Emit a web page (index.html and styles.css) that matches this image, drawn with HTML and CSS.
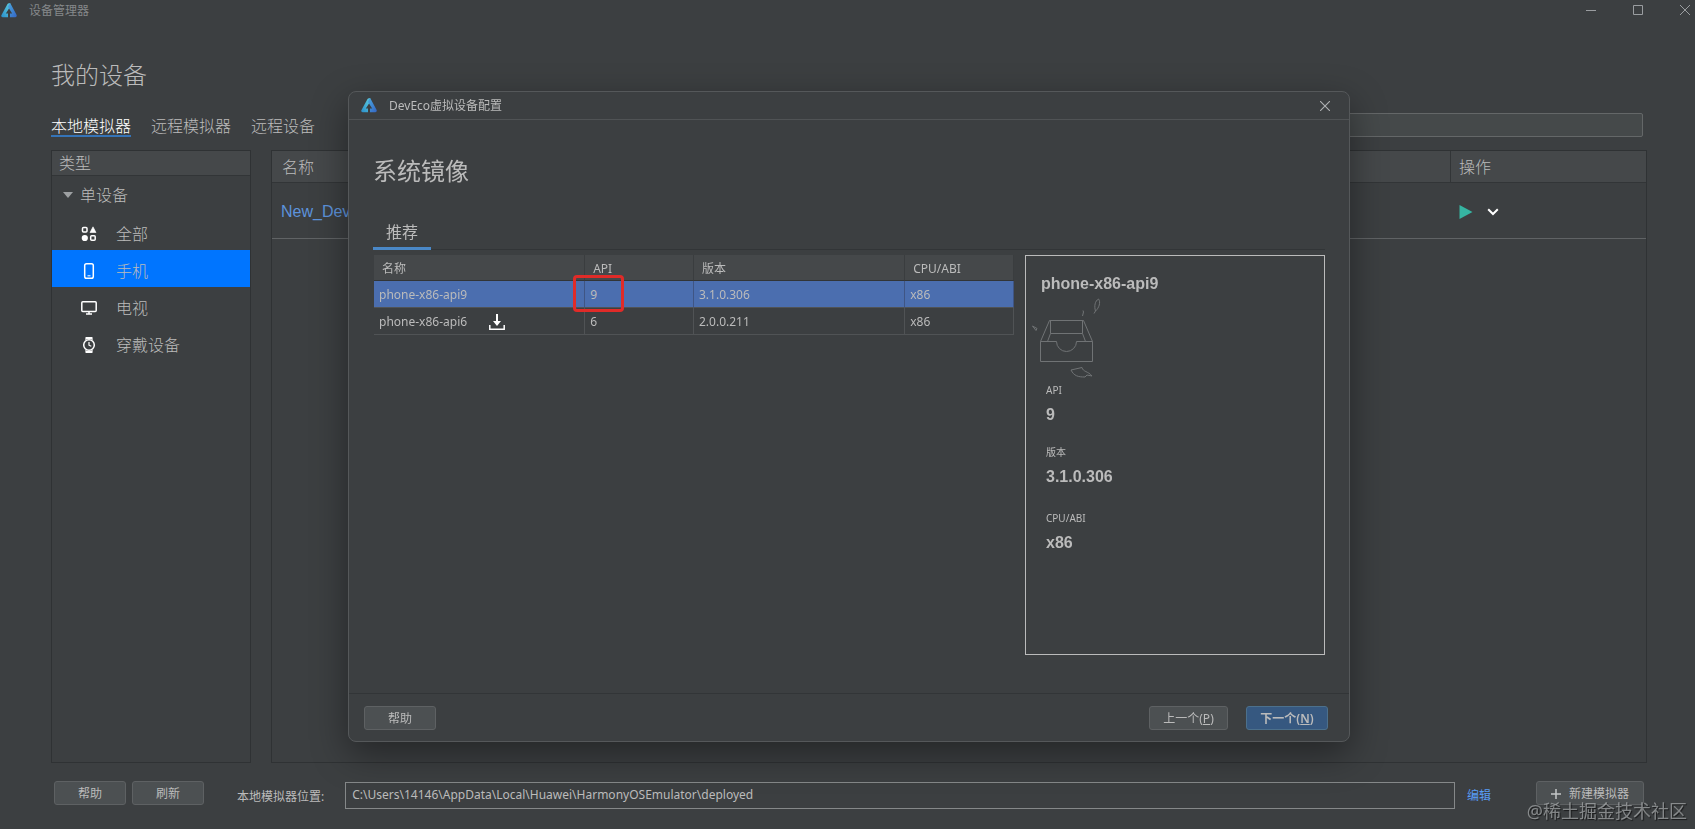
FILE: index.html
```html
<!DOCTYPE html>
<html lang="zh-CN">
<head>
<meta charset="utf-8">
<title>设备管理器</title>
<link rel="stylesheet" href="styles.css">
</head>
<body>
<svg width="0" height="0" class="defs" aria-hidden="true">
  <defs>
    <linearGradient id="lg-left" x1="0" y1="1" x2="1" y2="0"><stop offset="0" stop-color="#2a8ecb"/><stop offset="1" stop-color="#5fd0dc"/></linearGradient>
    <linearGradient id="lg-right" x1="0" y1="0" x2="1" y2="1"><stop offset="0" stop-color="#4aa8e0"/><stop offset="1" stop-color="#3566c4"/></linearGradient>
    <symbol id="logo" viewBox="0 0 16 15">
      <path d="M6.500 1Q7 .3 8 .3H9.500L8 5.500 4.800 10.600H7V14.200H1.600Q-.4 13.800.5 12Z" fill="url(#lg-left)"/>
      <path d="M8.500.3Q9.200.3 9.700 1L15.500 11.800Q16.300 13.800 14.400 14.200H9V10.600H11.200L8 5.500 6.800 3.800Z" fill="url(#lg-right)"/>
    </symbol>
  </defs>
</svg>
<header class="titlebar">
  <svg class="logo"><use href="#logo"/></svg>
  <span class="window-title">设备管理器</span>
  <div class="window-controls">
    <button type="button" aria-label="最小化"><svg width="10" height="10" viewBox="0 0 10 10"><path d="M0 5.500H10"/></svg></button>
    <button type="button" aria-label="最大化"><svg width="10" height="10" viewBox="0 0 10 10"><path d="M.5.5H9.500V9.500H.5Z"/></svg></button>
    <button type="button" aria-label="关闭"><svg width="10" height="10" viewBox="0 0 10 10"><path d="M0 0 10 10M10 0 0 10"/></svg></button>
  </div>
</header>
<main class="manager">
  <h1>我的设备</h1>
  <div class="toolbar">
    <nav class="tabs">
      <a href="#local" class="active">本地模拟器</a>
      <a href="#remote-emulator">远程模拟器</a>
      <a href="#remote-device">远程设备</a>
    </nav>
    <input class="search" type="text" aria-label="搜索">
  </div>
  <div class="panels">
    <section class="types">
      <h2>类型</h2>
      <button type="button" class="group"><svg width="10" height="6" viewBox="0 0 10 6"><path d="M0 0H10L5 6Z" fill="#9da0a2"/></svg>单设备</button>
      <button type="button" class="type">
        <svg width="16" height="16" viewBox="0 0 16 16" fill="none" stroke="#fff" stroke-width="1.500"><rect x="1.500" y="1.500" width="4.500" height="4.500" rx="1"/><path d="M12 .8 15 6.500H9Z" fill="#fff" stroke="#fff" stroke-width=".6" stroke-linejoin="round"/><circle cx="3.800" cy="12" r="3.100" fill="#fff" stroke="none"/><rect x="9.700" y="9.700" width="4.500" height="4.500" rx="1"/></svg>全部</button>
      <button type="button" class="type selected">
        <svg width="16" height="16" viewBox="0 0 16 16" fill="none" stroke="#fff" stroke-width="1.500"><rect x="3.700" y=".8" width="8.600" height="14.400" rx="1.800"/><path d="M6.500 12.800H9.500" stroke-width="1"/></svg>手机</button>
      <button type="button" class="type">
        <svg width="16" height="16" viewBox="0 0 16 16" fill="none" stroke="#fff" stroke-width="1.500"><rect x=".8" y="1.800" width="14.400" height="9.600" rx="1"/><path d="M5 14H11M8 11.500V14"/></svg>电视</button>
      <button type="button" class="type">
        <svg width="16" height="16" viewBox="0 0 16 16" fill="none" stroke="#fff" stroke-width="1.500"><circle cx="8" cy="8" r="5.300"/><path d="M4.600 0H11.400L11.800 3Q8 .8 4.200 3ZM4.600 16H11.400L11.800 13Q8 15.200 4.200 13Z" fill="#fff" stroke="none"/><path d="M8 5V8.200L10.300 9.300" stroke-width="1.200"/></svg>穿戴设备</button>
    </section>
    <section class="devices">
      <table>
        <thead><tr><th>名称</th><th class="actions-head">操作</th></tr></thead>
        <tbody><tr>
          <td><a href="#device">New_Device</a></td>
          <td><div class="actions">
            <button type="button" aria-label="启动"><svg width="14" height="14" viewBox="0 0 14 14"><path d="M.5 0 13.500 7 .5 14Z" fill="#36b5a2"/></svg></button>
            <button type="button" aria-label="更多"><svg width="12" height="8" viewBox="0 0 12 8"><path d="M1.200 1.300 6 6 10.800 1.300" fill="none" stroke="#fff" stroke-width="2"/></svg></button>
          </div></td>
        </tr></tbody>
      </table>
    </section>
  </div>
  <footer class="bottom-bar">
    <button type="button" class="btn">帮助</button>
    <button type="button" class="btn">刷新</button>
    <label for="location">本地模拟器位置:</label>
    <input id="location" type="text" value="C:\Users\14146\AppData\Local\Huawei\HarmonyOSEmulator\deployed">
    <a href="#edit" class="edit">编辑</a>
    <button type="button" class="btn create"><svg width="10" height="10" viewBox="0 0 10 10"><path d="M5 0V10M0 5H10" stroke="#c4c6c7" stroke-width="1.500"/></svg>新建模拟器</button>
  </footer>
</main>
<div class="overlay">
  <div class="dialog" role="dialog" aria-labelledby="dialog-title">
    <header class="dialog-header">
      <svg class="logo"><use href="#logo"/></svg>
      <span id="dialog-title">DevEco虚拟设备配置</span>
      <button type="button" aria-label="关闭对话框"><svg width="10" height="10" viewBox="0 0 10 10"><path d="M0 0 10 10M10 0 0 10" stroke="#afb1b3" stroke-width="1.100"/></svg></button>
    </header>
    <div class="dialog-body">
      <h2>系统镜像</h2>
      <div class="image-tabs"><button type="button">推荐</button></div>
      <div class="columns">
        <div class="images">
          <table>
            <colgroup><col class="c-name"><col class="c-api"><col class="c-version"><col class="c-cpu"></colgroup>
            <thead><tr><th>名称</th><th>API</th><th>版本</th><th>CPU/ABI</th></tr></thead>
            <tbody>
              <tr class="selected"><td>phone-x86-api9</td><td class="marked">9</td><td>3.1.0.306</td><td>x86</td></tr>
              <tr><td><span class="name-cell">phone-x86-api6<button type="button" aria-label="下载"><svg width="16" height="16" viewBox="0 0 16 16"><path d="M7 0H9V7H12L8 12 4 7H7Z" fill="#fff"/><path d="M.8 11V15.200H15.200V11" fill="none" stroke="#fff" stroke-width="1.500"/></svg></button></span></td><td>6</td><td>2.0.0.211</td><td>x86</td></tr>
            </tbody>
          </table>
        </div>
        <aside class="details">
          <h3>phone-x86-api9</h3>
          <svg class="empty-box" width="70" height="80" viewBox="0 0 70 80" fill="none" stroke="#707375">
            <path d="M8.500 43.500H24.500A10 10 0 0 0 44.500 43.500H60.500V63.500H8.500ZM8.500 43.500 17.500 22.500H51.500L60.500 43.500M18.500 22.500V35.500H50.500V22.500M18.500 35.500 15.500 43.500M50.500 35.500 53.500 43.500"/>
            <path d="M66.500 1C63 3 62 8 63.500 13L62 15.500M63.500 13C67 10 69 4 66.500 1M51 12.500 51.500 14 50.500 18M.5 28 4 32.500 5 30.500Z"/>
            <path d="M39 72 50 69.500C51 74 56 73 60 78L55 77 53 79C46 79 42 78 39 72Z"/>
          </svg>
          <dl>
            <div><dt>API</dt><dd>9</dd></div>
            <div><dt>版本</dt><dd>3.1.0.306</dd></div>
            <div><dt>CPU/ABI</dt><dd>x86</dd></div>
          </dl>
        </aside>
      </div>
    </div>
    <footer class="dialog-footer">
      <button type="button" class="btn">帮助</button>
      <button type="button" class="btn previous">上一个(<u>P</u>)</button>
      <button type="button" class="btn primary">下一个(<u>N</u>)</button>
    </footer>
  </div>
</div>
<div class="watermark">@稀土掘金技术社区</div>
</body>
</html>
```
FILE: styles.css
```css
*, *::after { box-sizing: border-box; }
body {
  margin: 0;
  height: 100vh;
  display: flex;
  flex-direction: column;
  background: #3c3f41;
  color: #bbbbbb;
  font: 12px/20px "Noto Sans", "Noto Sans CJK SC", sans-serif;
  overflow: hidden;
}
h1, h2, h3, dl, dd { margin: 0; font-weight: 400; }
button {
  font: inherit;
  color: inherit;
  background: none;
  border: 0;
  padding: 0;
}
button svg { display: block; }
a { text-decoration: none; color: #589df6; }
table { border-collapse: separate; border-spacing: 0; width: 100%; table-layout: fixed; }
th { text-align: left; font-weight: 400; }
.defs { position: absolute; }
.logo { width: 16px; height: 15px; flex: none; }

.titlebar {
  height: 20px;
  display: flex;
  align-items: center;
  padding: 0 5px 0 1px;
  color: #85888a;
}
.window-title { margin-left: 12px; padding-top: 1px; }
.window-controls {
  margin-left: auto;
  display: flex;
  gap: 37px;
}
.window-controls path { fill: none; stroke: #9a9da0; }

.manager {
  flex: 1;
  min-height: 0;
  display: flex;
  flex-direction: column;
  padding: 37px 48px 20px 51px;
}
h1 { font-size: 24px; line-height: 36px; font-weight: 300; }
.toolbar { display: flex; margin: 20px 4px 13px 0; }
.tabs {
  display: flex;
  gap: 20px;
  font-size: 16px;
  line-height: 24px;
  font-weight: 300;
}
.tabs a { color: #bbbbbb; height: 24px; padding-top: 1px; }
.tabs .active { color: #ffffff; border-bottom: 2px solid #3574b8; }
.search {
  flex: 1;
  margin-left: 60px;
  height: 24px;
  background: #45494a;
  border: 1px solid #646768;
  border-radius: 2px;
}
.panels { flex: 1; min-height: 0; display: flex; gap: 20px; }
.types, .devices { border: 1px solid #2f3234; }
.types {
  flex: 0 0 200px;
  display: flex;
  flex-direction: column;
  font-size: 16px;
  font-weight: 300;
}
.types h2 {
  font-size: 16px;
  line-height: 24px;
  font-weight: 300;
  padding-left: 7px;
  background: #45484a;
  border-bottom: 1px solid #323537;
}
.group {
  display: flex;
  align-items: center;
  gap: 7px;
  height: 37px;
  padding-left: 11px;
}
.type {
  display: flex;
  align-items: center;
  gap: 19px;
  height: 37px;
  padding: 4px 0 0 29px;
}
.type.selected { background: #0075ff; }
.devices { flex: 1; min-width: 0; font-size: 16px; }
.devices th {
  height: 32px;
  padding: 0 0 0 10px;
  font-weight: 300;
  background: #45484a;
  border-bottom: 1px solid #323537;
}
.devices .actions-head { width: 196px; padding-left: 8px; border-left: 1px solid #323537; }
.devices td {
  height: 56px;
  padding: 2px 0 0 9px;
  border-bottom: 1px solid #606365;
}
.devices a { font-family: "Liberation Sans", sans-serif; color: #5d93dc; }
.actions { display: flex; align-items: center; gap: 14px; }

.bottom-bar { display: flex; align-items: center; padding: 18px 3px 0 3px; }
.btn {
  width: 72px;
  height: 24px;
  line-height: 20px;
  padding-top: 2px;
  background: #4c5052;
  border: 1px solid #5e6163;
  border-radius: 3px;
  flex: none;
}
.bottom-bar .btn { align-self: flex-start; }
.bottom-bar .btn + .btn { margin-left: 6px; }
.bottom-bar label { margin: 3px 21px 0 33px; }
.bottom-bar input {
  flex: 1;
  min-width: 0;
  height: 27px;
  margin-top: 1px;
  padding: 0 6px 2px;
  font: 12px "Noto Sans", sans-serif;
  color: #bbbbbb;
  background: transparent;
  border: 1px solid #858889;
}
.edit { margin: 2px 45px 0 12px; }
.bottom-bar .create {
  width: 108px;
  display: flex;
  align-items: center;
  justify-content: center;
  gap: 8px;
}

.overlay { position: fixed; inset: 0; padding: 91px 345px 87px 348px; }
.dialog {
  height: 100%;
  display: flex;
  flex-direction: column;
  background: #3c3f41;
  border: 1px solid #55585a;
  border-radius: 8px;
  box-shadow: 0 12px 36px rgba(0, 0, 0, 0.4);
}
.dialog-header {
  height: 28px;
  display: flex;
  align-items: center;
  padding: 0 19px 0 12px;
  border-bottom: 1px solid #505355;
}
.dialog-header span { margin-left: 12px; }
.dialog-header button { margin-left: auto; }
.dialog-body {
  flex: 1;
  min-height: 0;
  display: flex;
  flex-direction: column;
  padding: 33px 24px 38px;
}
.dialog-body h2 { font-size: 24px; line-height: 36px; }
.image-tabs { margin-top: 30px; border-bottom: 1px solid #323537; height: 31px; }
.image-tabs button {
  width: 58px;
  height: 31px;
  padding-bottom: 2px;
  font-size: 16px;
  line-height: 24px;
  border-bottom: 3px solid #4a88c7;
}
.columns { flex: 1; display: flex; gap: 11px; padding-top: 5px; }
.images { flex: 1; min-width: 0; padding-left: 1px; }
.c-name { width: 33%; }
.c-api { width: 17%; }
.c-version { width: 33%; }
.c-cpu { width: 17%; }
.images th {
  height: 26px;
  padding: 2px 0 0 8px;
  background: #45484a;
  border-right: 1px solid #3a3d3f;
  border-bottom: 1px solid #323537;
}
.images td {
  height: 27px;
  padding: 1px 0 0 5px;
  border-right: 1px solid #505355;
  border-bottom: 1px solid #505355;
}
.images .selected td { background: #4b6eaf; border-right-color: #3f5584; }
.name-cell { display: flex; align-items: center; gap: 22px; }
.marked { position: relative; }
.marked::after {
  content: "";
  position: absolute;
  left: -12px;
  top: -6px;
  width: 51px;
  height: 37px;
  border: 3px solid #e02b28;
  border-radius: 4px;
}
.details { flex: 0 0 300px; border: 1px solid #bbbbbb; padding: 16px 0 0 6px; }
.details h3 {
  padding-left: 9px;
  font: bold 16px/24px "Liberation Sans", sans-serif;
}
.empty-box { display: block; margin-top: 2px; }
dl { display: flex; flex-direction: column; gap: 15px; padding: 2px 0 0 14px; }
dl div:last-child { padding-top: 4px; }
dt { font-size: 10px; line-height: 20px; }
dd { font: bold 16px/24px "Liberation Sans", sans-serif; margin-top: 3px; }
.dialog-footer {
  height: 48px;
  display: flex;
  align-items: center;
  padding: 0 21px 0 15px;
  border-top: 1px solid #323537;
}
.previous { margin-left: auto; width: 79px; }
.primary {
  width: 82px;
  margin-left: 18px;
  background: #365880;
  border-color: #4c708c;
  font-weight: 600;
}
.watermark {
  position: fixed;
  right: 8px;
  bottom: 5px;
  font-size: 18px;
  line-height: 26px;
  color: rgba(190, 193, 195, 0.6);
  text-shadow: 1px 1px 1px rgba(0, 0, 0, 0.6);
}
```
